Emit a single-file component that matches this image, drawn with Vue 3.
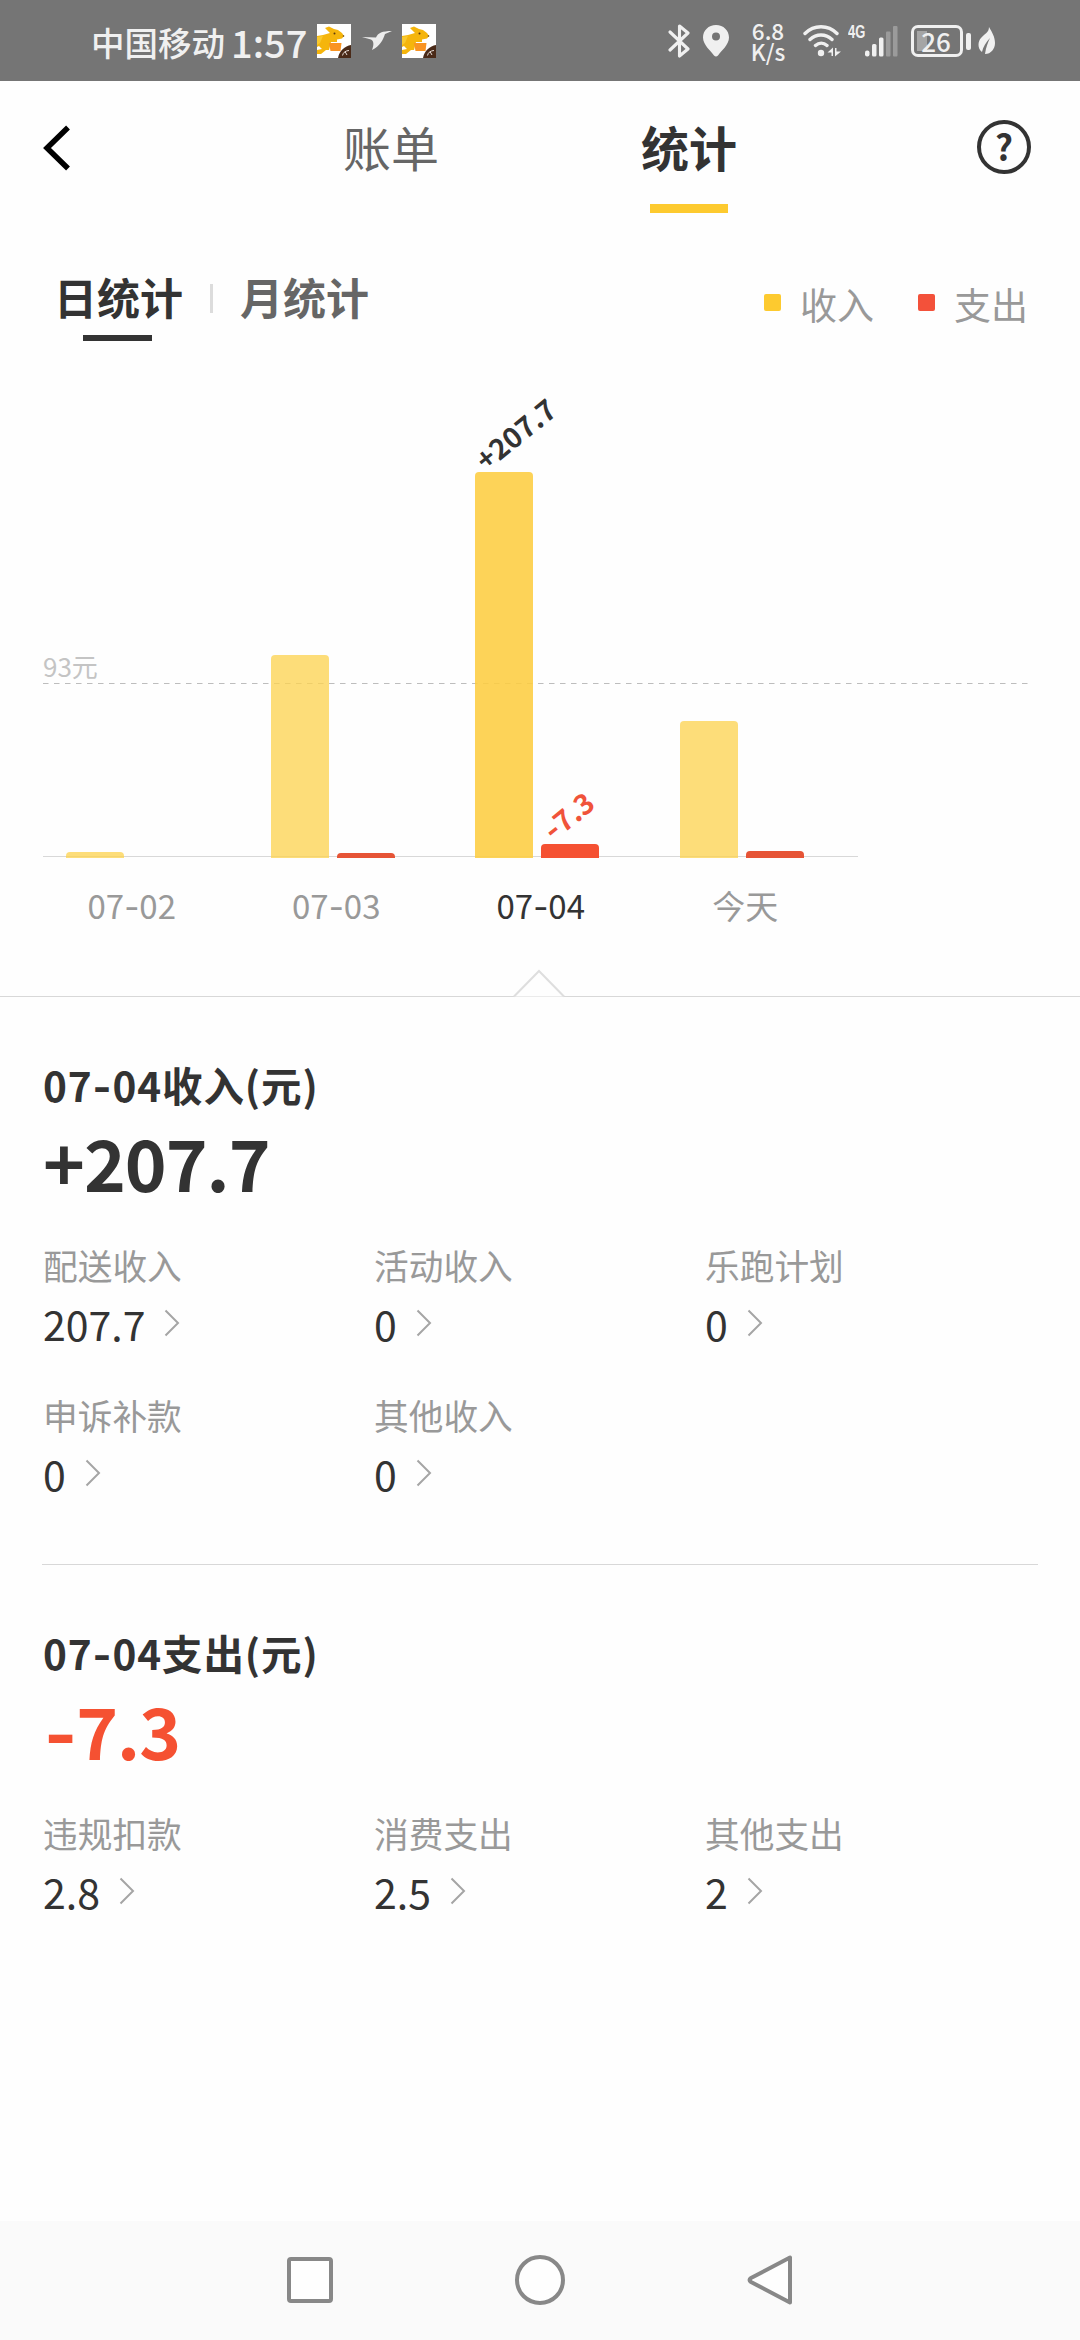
<script setup>
import { h } from 'vue'

// Amounts and dates use a wider, slightly raised hyphen than the CJK face offers.
const Num = (props) =>
  h('span', props.text.split(/(-)/).filter(Boolean).map((t) => (t === '-' ? h('span', { class: 'hyphen' }, t) : t)))
Num.props = ['text']

const days = [
  { label: '07-02', income: 6, expense: 0 },
  { label: '07-03', income: 203, expense: 5 },
  { label: '07-04', income: 386, expense: 14, active: true, plus: '+207.7', minus: '-7.3' },
  { label: '今天', income: 137, expense: 7 },
]
const sections = [
  {
    title: '07-04收入(元)', total: '+207.7', kind: 'income',
    items: [
      { name: '配送收入', value: '207.7' },
      { name: '活动收入', value: '0' },
      { name: '乐跑计划', value: '0' },
      { name: '申诉补款', value: '0' },
      { name: '其他收入', value: '0' },
    ],
  },
  {
    title: '07-04支出(元)', total: '-7.3', kind: 'expense',
    items: [
      { name: '违规扣款', value: '2.8' },
      { name: '消费支出', value: '2.5' },
      { name: '其他支出', value: '2' },
    ],
  },
]
</script>

<template>
  <div class="screen">
    <div class="status">
      <span class="carrier">中国移动</span>
      <span class="time">1:57</span>
      <svg v-for="n in 2" :key="n" class="app-icon" :class="'app' + n" viewBox="0 0 34 34">
        <rect width="34" height="34" fill="#fff" />
        <path d="M8 4L12 2.500L17 5L21 6L25 9L27 12L25 14.500L20 15.500V18H14L12 26L9 26L4 30H0V26L5 25L2 22L0 23V12L6 11L13 9Z" fill="#f5b50c" />
        <path d="M12 19H24.500L23.500 27H13.500Z" fill="#f99422" />
        <path d="M0 13L6 12L3 19L0 21Z" fill="#f9c92e" />
        <circle cx="17.500" cy="9.500" r="1" fill="#5b3a10" />
        <circle cx="26.500" cy="12" r=".8" fill="#5b3a10" />
        <path d="M21 34C22 27 28 22 34 21V34Z" fill="#4a2a18" />
        <path d="M25.500 31.500C26 28.500 29 26.500 32 26.500M28 27.500L30 31" fill="none" stroke="#e8ded8" stroke-width="1" />
      </svg>
      <svg class="bird" viewBox="0 0 30 20"><path d="M0 6L14 6.500C16 2 20 0 30 0L23 3C21 9 18 15 10 19C12 14 12 10 9 8.500Z" fill="#ededed" /></svg>
      <span class="spacer"></span>
      <svg class="bt" viewBox="0 0 22 34" fill="none" stroke="#f0f0f0" stroke-width="3.100" stroke-linejoin="round" stroke-linecap="round"><path d="M2 8L20 25L11.500 32V2L20 9L2 26" /></svg>
      <svg class="pin" viewBox="0 0 26 32"><path fill-rule="evenodd" d="M13 0C5.500 0 0 5.500 0 12.500C0 20 8 26 11 30.500Q13 32.500 15 30.500C18 26 26 20 26 12.500C26 5.500 20.500 0 13 0ZM13 7.500A4 4 0 1 1 13 15.500A4 4 0 1 1 13 7.500Z" fill="#f0f0f0" /></svg>
      <span class="speed"><span>6.8</span><span>K/s</span></span>
      <svg class="wifi" viewBox="0 0 38 32" fill="none" stroke="#f0f0f0" stroke-width="3.400" stroke-linecap="round">
        <path d="M2 8.500C11 -.5 25 -.5 34 8.500M7 14.500C13.500 8.500 22.500 8.500 29 14.500M12.500 20.500C16 17.500 20.500 17.500 24 20.500" />
        <circle cx="18" cy="28" r="3.200" fill="#f0f0f0" stroke="none" />
        <path d="M24.500 27.500L30 22.500V31H28.500V27.500ZM38 26.500L32 31.500V23H33.500V26.500Z" fill="#f0f0f0" stroke="none" />
      </svg>
      <span class="lte">4G</span>
      <svg class="signal" viewBox="0 0 33 32">
        <g fill="#f0f0f0"><rect y="25.500" width="4.500" height="6" rx="2" /><rect x="7" y="19" width="4.500" height="12.500" rx="1.500" /><rect x="14" y="12.500" width="4.500" height="19" rx="1.500" /></g>
        <g fill="#9b9b9b"><rect x="21" y="6.500" width="4.500" height="25" rx="1" /><rect x="28" y="1" width="4.500" height="30.500" rx="1" /></g>
      </svg>
      <div class="battery"><span>26</span></div>
      <i class="nub"></i>
      <svg class="leaf" viewBox="0 0 18 28">
        <path d="M11 0C14 5 17 10 17 16C17 22 13 27 7 27C8 20 10 15 12 11C8 15 5 20 4 25C-1 21 0 14 3 11C6 7 11 6 11 0Z" fill="#f0f0f0" />
      </svg>
    </div>

    <header class="header">
      <svg class="back" viewBox="0 0 28 46"><path d="M25 2.500L4 23L25 43.500" fill="none" stroke="#000" stroke-width="5.500" /></svg>
      <nav class="tabs">
        <div class="tab">账单</div>
        <div class="tab on">统计</div>
      </nav>
      <div class="help">?</div>
    </header>

    <div class="sub">
      <div class="period on">日统计</div>
      <i class="split"></i>
      <div class="period">月统计</div>
      <span class="spacer"></span>
      <div class="legend"><i class="key yellow"></i>收入</div>
      <div class="legend"><i class="key red"></i>支出</div>
    </div>

    <div class="chart">
      <svg class="average" viewBox="0 0 988 1"><path d="M0 .5H988" stroke="#bdbdbd" stroke-width="1" stroke-dasharray="5.500 5.500" /></svg>
      <span class="average-label">93元</span>
      <div class="days">
        <div v-for="d in days" :key="d.label" class="day" :class="{ active: d.active }">
          <div class="bars">
            <div class="bar income" :style="{ height: d.income + 'px' }"><Num v-if="d.plus" class="tip" :text="d.plus" /></div>
            <div class="bar expense" :style="{ height: d.expense + 'px' }"><Num v-if="d.minus" class="tip" :text="d.minus" /></div>
          </div>
          <div class="date"><Num :text="d.label" /></div>
        </div>
      </div>
      <svg class="pointer" viewBox="0 0 52 29"><path d="M1 27.500L26 2L51 27.500" fill="#fefefe" stroke="#dedede" stroke-width="2" /></svg>
    </div>

    <section v-for="s in sections" :key="s.title" class="section" :class="s.kind">
      <h2><Num :text="s.title" /></h2>
      <div class="total"><Num :text="s.total" /></div>
      <div class="grid">
        <div v-for="i in s.items" :key="i.name" class="item">
          <div class="name">{{ i.name }}</div>
          <div class="value">{{ i.value }}<svg viewBox="0 0 16 28"><path d="M1.500 1.500L14 14L1.500 26.500" fill="none" stroke="#a5a5a5" stroke-width="2" /></svg></div>
        </div>
      </div>
    </section>

    <footer class="navbar">
      <svg viewBox="0 0 52 52"><rect x="5" y="5" width="42" height="42" rx="2" /></svg>
      <svg viewBox="0 0 52 52"><circle cx="26" cy="26" r="23" /></svg>
      <svg viewBox="0 0 52 52"><path d="M46 3.500V48.500L7 28Q4 26 7 24Z" /></svg>
    </footer>
  </div>
</template>

<style>
body { margin: 0; }
.hyphen { font-family: Inter, sans-serif; line-height: 1; }
</style>

<style scoped>
* { box-sizing: border-box; }
.screen { width: 1080px; height: 2340px; background: #fefefe; color: #333; font-family: "Noto Sans CJK SC", sans-serif; display: flex; flex-direction: column; overflow: hidden; white-space: nowrap; }
svg { display: block; flex: none; }
.spacer { flex: 1; }

.status { height: 81px; flex: none; background: #757575; color: #f0f0f0; display: flex; align-items: center; padding: 1px 84px 0 91px; }
.carrier { width: 140px; font-size: 33.500px; font-weight: 500; }
.time { width: 86px; font-size: 38px; font-weight: 500; }
.app-icon { width: 34px; height: 34px; }
.app2 { order: 1; margin-left: 10px; }
.bird { width: 30px; height: 20px; margin-left: 11px; }
.status > .spacer, .bt, .pin, .speed, .wifi, .lte, .signal, .battery, .nub, .leaf { order: 2; flex-shrink: 0; }
.bt { width: 22px; height: 34px; margin-right: 13px; }
.pin { width: 26px; height: 32px; margin-right: 21px; }
.speed { width: 36px; margin-right: 17px; display: flex; flex-direction: column; align-items: center; font-size: 22.500px; line-height: 21.500px; font-weight: 500; }
.wifi { width: 38px; height: 32px; margin-right: 7px; }
.lte { width: 17px; font: 700 18px/18px "Liberation Sans", sans-serif; transform: scaleX(.72); transform-origin: left; margin-bottom: 18px; }
.signal { width: 33px; height: 32px; margin-right: 13px; }
.battery { width: 52px; height: 32px; border: 3px solid #f0f0f0; border-radius: 7px; font-size: 26px; line-height: 25px; font-weight: 500; text-align: center; background: linear-gradient(#a5a5a5, #a5a5a5) 3px 3px / 10px 20px no-repeat; }
.battery span { display: block; margin-left: -2px; }
.nub { width: 5px; height: 17px; border-radius: 2px; background: #f0f0f0; margin: 0 7px 0 3px; }
.leaf { width: 18px; height: 28px; }

.header { height: 132px; flex: none; display: flex; align-items: flex-start; padding: 0 49px 0 43px; }
.back { width: 28px; height: 46px; margin-top: 44px; }
.tabs { flex: 1; display: flex; padding-left: 272px; gap: 202px; }
.tab { height: 132px; width: 96px; font-size: 48px; line-height: 70px; padding-top: 30px; color: #666; display: flex; flex-direction: column; align-items: center; justify-content: space-between; }
.tab.on { color: #333; font-weight: 700; }
.tab.on::after { content: ""; width: 78px; height: 9px; background: #fdca2f; }
.help { width: 54px; height: 54px; margin-top: 39px; border: 4px solid #333; border-radius: 50%; text-align: center; font-size: 35px; line-height: 44px; font-weight: 700; }

.sub { height: 129px; flex: none; display: flex; align-items: flex-start; padding: 53px 52px 0 54px; }
.period { height: 75px; font-size: 43px; line-height: 60px; font-weight: 700; color: #666; display: flex; flex-direction: column; align-items: center; justify-content: space-between; }
.period.on { color: #333; }
.period.on::after { content: ""; width: 69px; height: 6px; background: #333; margin-right: 2px; }
.split { width: 3px; height: 29px; margin: 18px 27px 0 27px; background: #dcdcdc; }
.legend { display: flex; align-items: center; font-size: 37px; line-height: 54px; margin: 11px 0 0 44px; color: #999; }
.key { width: 17px; height: 17px; border-radius: 2px; margin: -4px 19px 0 0; }
.yellow { background: #fdca2f; }
.red { background: #f3513a; }

.chart { height: 655px; flex: none; position: relative; border-bottom: 1px solid #d8d8d8; padding-left: 43px; }
.average { position: absolute; left: 43px; top: 341px; width: 988px; height: 1px; }
.average-label { position: absolute; left: 43px; top: 305px; font-size: 26px; line-height: 38px; color: #c4c4c4; }
.days { display: flex; width: 815px; padding-top: 100px; background: linear-gradient(#d8d8d8, #d8d8d8) 0 514px / 815px 1px no-repeat; }
.day { width: 204.500px; flex: none; }
.bars { height: 416px; display: flex; align-items: flex-end; gap: 8px; padding-left: 23px; }
.bar { width: 58px; border-radius: 4px 4px 0 0; position: relative; }
.bar.income { background: rgba(253, 211, 81, .77); }
.bar.expense { background: #e65436; }
.active .income { background: rgba(253, 205, 65, .88); }
.active .expense { background: #f55132; }
.tip { position: absolute; left: 8px; bottom: 100%; font-size: 28.500px; line-height: 30px; font-weight: 700; transform: rotate(-39deg); transform-origin: 6px 24px; }
.expense .tip { color: #f0533a; left: 9px; bottom: calc(100% + 1px); }
.date { margin-top: 23px; padding-right: 27px; text-align: center; font-size: 33px; line-height: 48px; color: #999; }
.active .date { color: #333; }
.pointer { position: absolute; left: 513px; bottom: -2px; width: 52px; height: 29px; }

.section { flex: none; height: 568px; margin: 0 42px; padding: 58px 0 0 1px; border-bottom: 1px solid #d8d8d8; }
.section.expense { border: 0; height: auto; }
h2 { margin: 0; font-size: 40.500px; line-height: 60px; font-weight: 700; letter-spacing: .9px; }
.total { font-size: 71px; line-height: 92px; font-weight: 700; letter-spacing: -1px; }
.expense .total { color: #f55132; }
.expense .total > span { margin-left: 1px; }
.grid { display: grid; grid-template-columns: repeat(3, 331px); grid-auto-rows: 150px; margin-top: 34px; }
.name { font-size: 34.700px; line-height: 48px; color: #999; }
.value { font-size: 41px; line-height: 60px; display: flex; align-items: center; margin-top: 4px; }
.value svg { width: 16px; height: 28px; margin: 0 0 0 19px; }

.navbar { margin-top: auto; height: 119px; background: #fafafa; display: flex; justify-content: center; gap: 178px; padding-top: 33px; }
.navbar svg { width: 52px; height: 52px; fill: #fefefe; stroke: #888; stroke-width: 4px; stroke-linejoin: round; }
</style>
